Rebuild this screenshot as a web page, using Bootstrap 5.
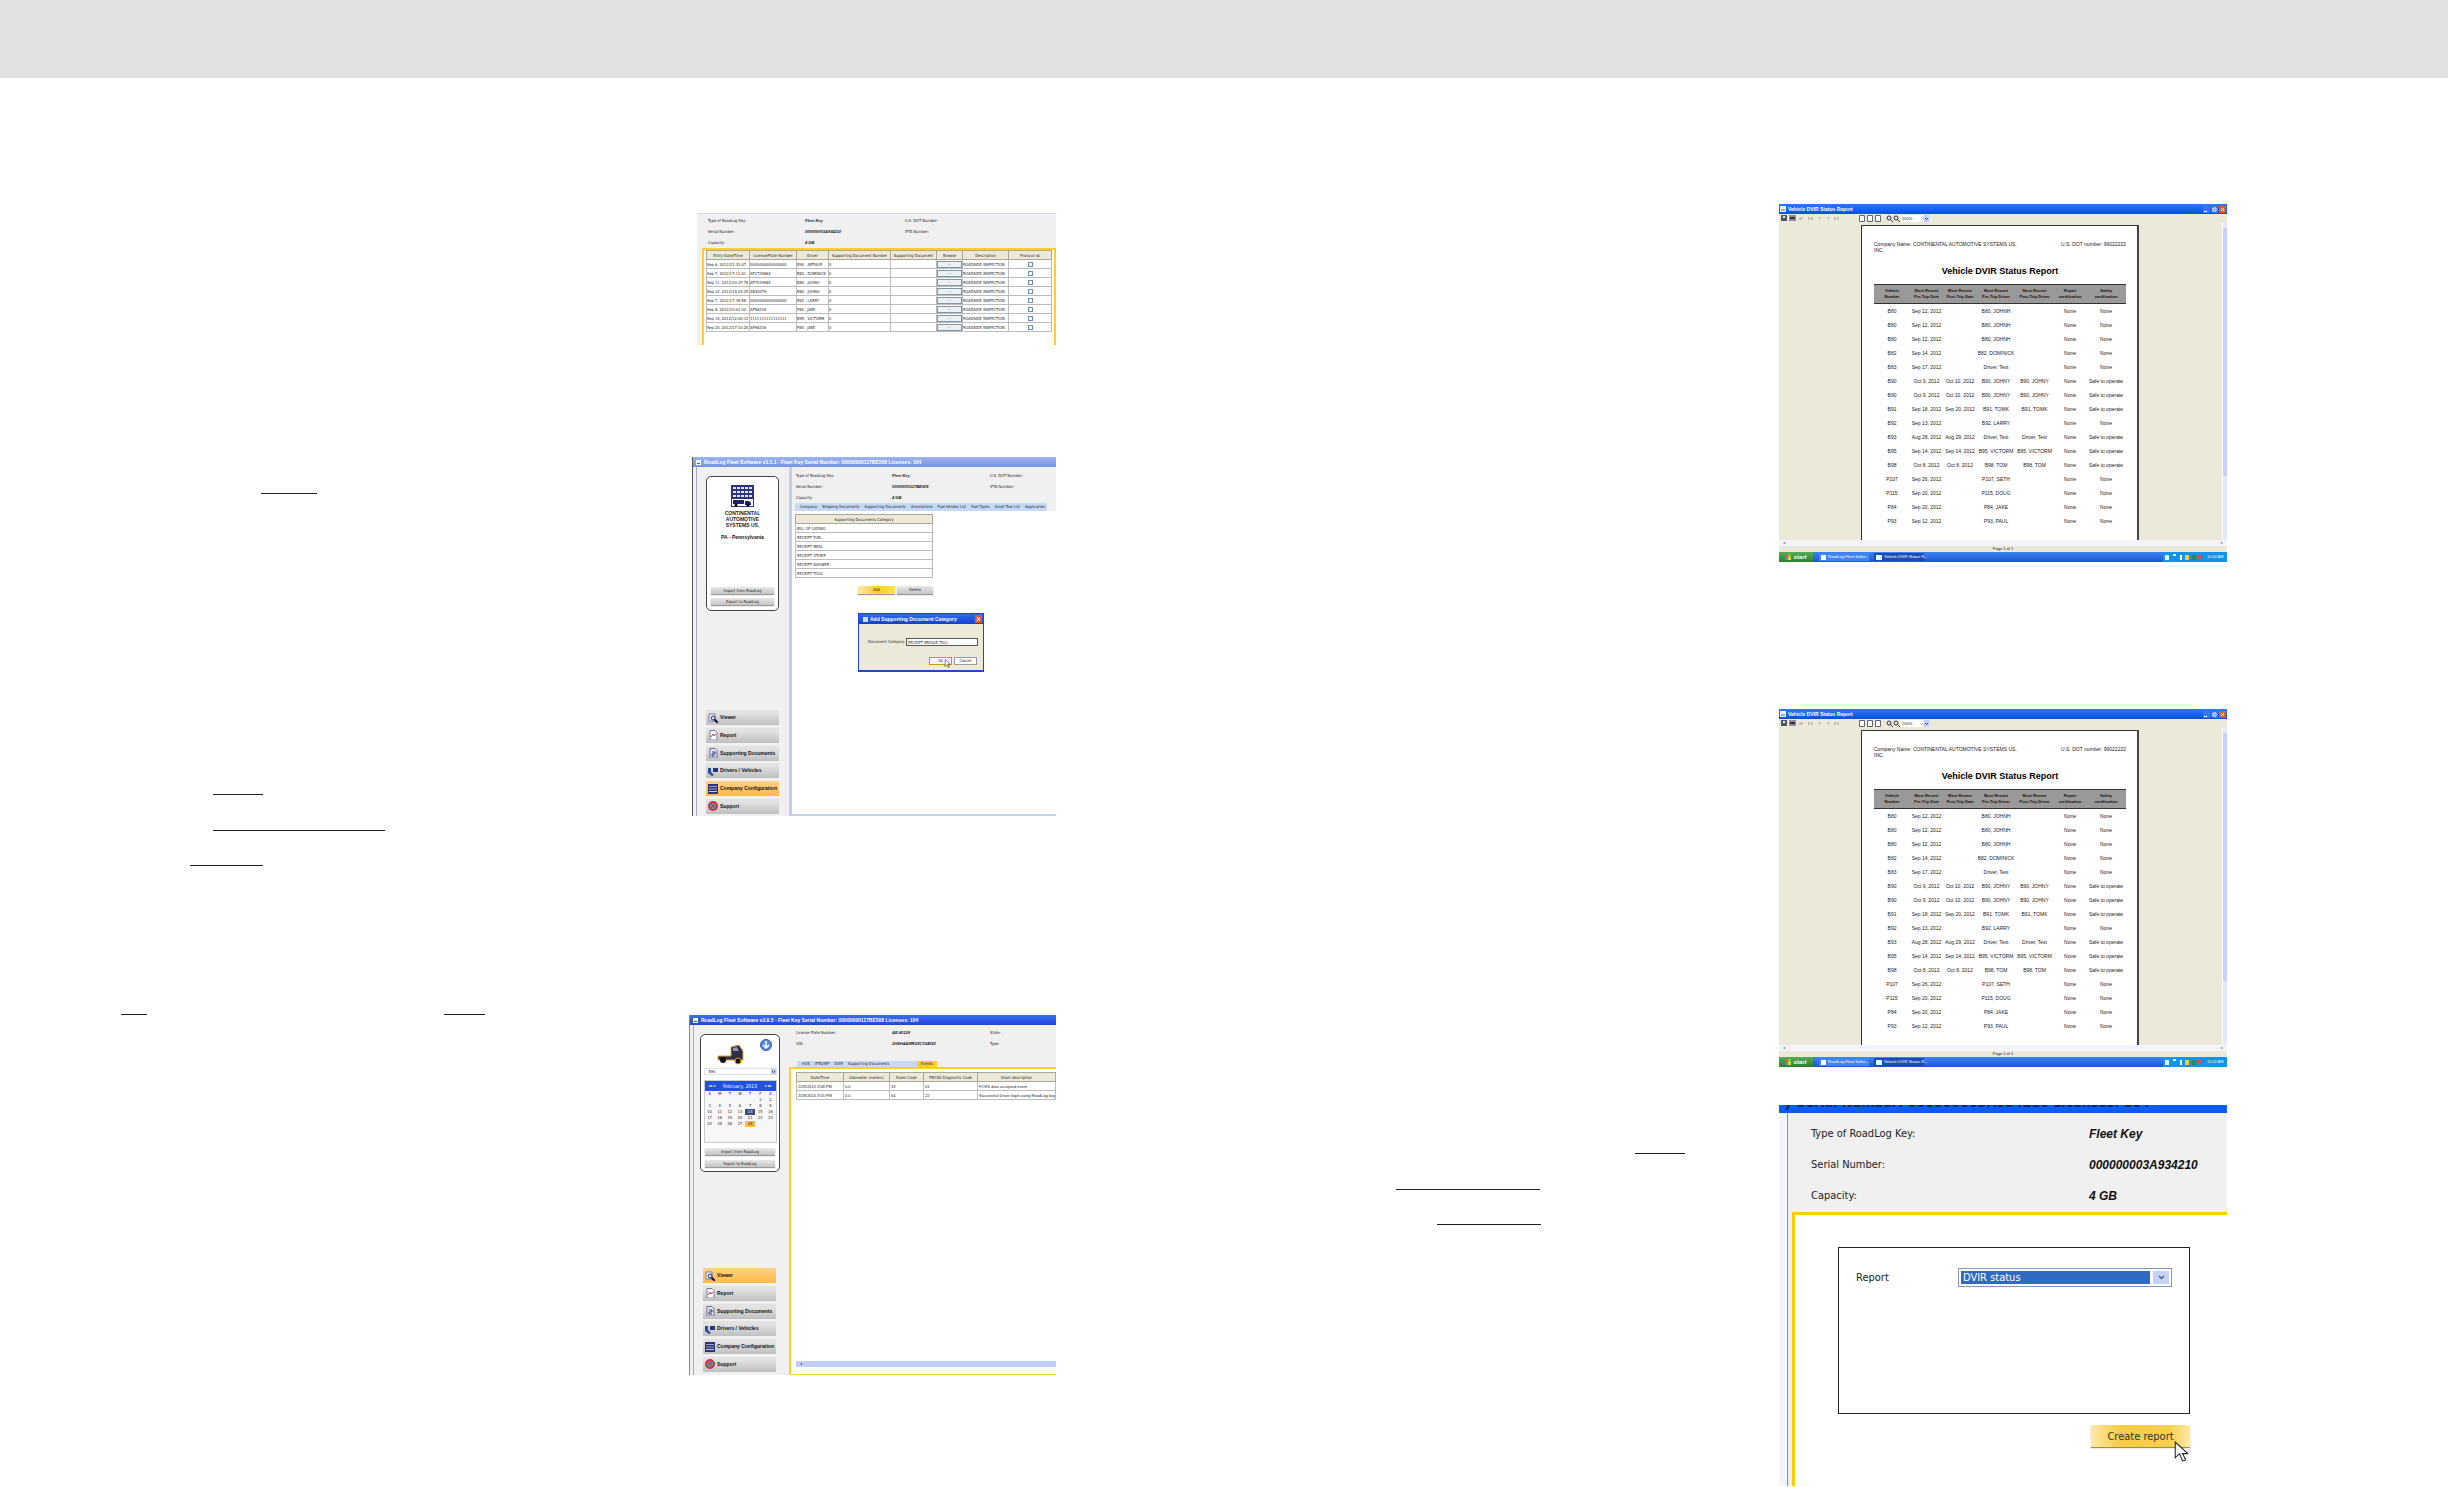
<!DOCTYPE html>
<html lang="en">
<head>
<meta charset="utf-8">
<meta name="viewport" content="width=device-width, initial-scale=1">
<title>RoadLog Fleet Software manual</title>
<link href="https://cdn.jsdelivr.net/npm/bootstrap@5.3.0/dist/css/bootstrap.min.css" rel="stylesheet">
<style>
body{background:#fff;color:#222;font-family:"DejaVu Sans Condensed","Open Sans",sans-serif;font-size:4px;line-height:1}
.topband{height:78px;background:#e2e2e2}
.leaf{flex:1 1 0;min-width:0}
.copy{flex:1 1 0;min-width:0}
.blank{height:1px;background:#231f20}
.shots-l{flex:0 0 367px;margin-right:168px;padding-top:135px}
.shots-r{flex:0 0 448px;margin-right:221px;padding-top:126px}
.shot{position:relative;overflow:hidden;background:#f0f0f0;white-space:nowrap}
.shot button,.shot input,.shot select{font:inherit;line-height:1;padding:0;margin:0;border-radius:0;color:inherit;appearance:none}
.shot svg{display:block;flex:none}
.bi{font-family:"Liberation Sans",sans-serif;font-weight:700;font-style:italic;color:#111}
.facts{display:grid;align-items:center}
/* grid tables */
.gridt{table-layout:fixed;border-collapse:collapse;background:#fff}
.gridt th,.gridt td{height:9px;padding:0 1px;border:1px solid #bcbcbc;overflow:hidden;font-weight:400;line-height:7px}
.f3 .gridt td{font-family:"Liberation Sans",sans-serif;padding-right:0}
.gridt th{background:#ece9d8;text-align:center;border-color:#aaa798}
.gridt button{display:block;width:100%;height:7px;background:#eef1f1;border:1px solid #7d98a8;line-height:4px}
.gridt input{display:block;width:5px;height:5px;margin:0 auto;border:1px solid #6b8db8;background:#fff}
/* figure one */
.f1{width:359px;height:132px;border-top:1px solid #d4d8ea}
.f1 .facts{grid-template-columns:97px 100px 1fr;grid-auto-rows:11px;padding:1px 0 0 11px}
.f1 .pane{height:98px;margin:0 0 0 5px;border:2px solid #fc3;border-bottom:0;background:#fff;padding:0 2px}
.f1 .gridt td{padding:0}
/* fleet windows */
.win{font-size:4px}
.wtitle{height:10px;padding:0 3px;gap:3px;font:700 5px/1 "Liberation Sans",sans-serif;color:#fff}
.side{flex:0 0 93px;margin-left:3px;border-left:1px solid #aab;padding:9px 9px 0 9px;background:#f0f0f1}
.badgecard{background:#fff;border:1px solid #444;border-radius:5px;text-align:center}
.gbtn{display:block;width:63px;height:7px;border:0;background:linear-gradient(#e8e8e8,#c4c4c4);box-shadow:0 1px 1px #999}
.nav6{height:104px}
.nav6 button{height:15px;width:73px;display:flex;align-items:center;gap:2px;padding-left:2px;border:0;background:linear-gradient(#e2e2e2 20%,#bfbfbf);font-family:"Liberation Sans",sans-serif;font-weight:700;font-size:5px;color:#111}
.nav6 button.on{background:linear-gradient(#ffd08a,#fb4)}
.tabsrow{height:8px;align-items:center;background:#c5d9f3;gap:5px;padding-left:5px;color:#223}
.f2{width:364px;height:359px;border-left:1px solid #555}
.f2 .facts,.f3 .facts{grid-template-columns:96px 98px 1fr}
.f2 .nav6{margin-bottom:2px}
.f3 .nav6{margin:0 0 3px 3px}
.f3{height:360px;border-left:1px solid #888}
.company{font:700 5px/6px "Liberation Sans",sans-serif;margin-top:3px}
.dlg{position:absolute;left:165px;top:156px;width:126px;height:59px;background:#ece9d8;border:1px solid #24d;border-bottom-width:2px}
.dlg .bar{height:10px;background:linear-gradient(#2f6bf0,#1240cf);color:#fff;font:700 5px/1 "Liberation Sans",sans-serif}
.dlg button{height:8px;width:23px;background:#fff;border:1px solid #99a}
.dlg input{width:72px;height:8px;border:1px solid #555;background:#fff;padding:0 1px}
.cursor{position:absolute}
.cal{table-layout:fixed;width:71px;border-collapse:collapse;background:#f7f7f7}
.cal td,.cal th{padding:0;height:6px;text-align:center;font-weight:400}
/* report windows */
.rep{height:358px;font-family:"Liberation Sans",sans-serif;background:#ece9d8;display:flex;flex-direction:column}
.rep .bar{height:10px;background:linear-gradient(#2a7cf8,#0550dc);color:#fff;font:700 5px/1 "Liberation Sans",sans-serif;padding-left:1px}
.rep .tools{height:9px;padding:0 1px;gap:1px}
.rep .paper{width:278px;margin:2px 0 0 82px;background:#fff;border:1px solid #333;border-right:2px solid #444;border-bottom:0;padding:15px 11px 0 12px;height:315px}
.rep .paper h2{font-size:9px;line-height:10px;font-weight:700;color:#000;margin:13px 0 8px;text-align:center}
.rep table{table-layout:fixed;width:252px;border-collapse:collapse;font-size:5px;text-align:center}
.rep thead th{height:19px;background:#999;border-top:1px solid #333;border-bottom:1px solid #333;font-size:4px;line-height:6px;color:#111;padding:0;vertical-align:middle}
.rep tbody td{height:14px;padding:0;line-height:6px}
.rep .vbar{width:5px;margin-left:auto;background:#e3e9fb;border-left:1px solid #fff}
.rep .vthumb{height:248px;margin-top:5px;background:#c3d2fb}
.hbar{height:6px;background:#f3f3f8}
.task{height:10px;background:linear-gradient(#3a86f4,#1f55d0);color:#fff}
.task .go{width:34px;height:10px;background:linear-gradient(#55ad55,#2c7f2c);font:italic 700 6px/1 "Liberation Sans",sans-serif;gap:2px}
.task .tray{width:64px;height:10px;background:#1493ea;margin-left:auto;gap:2px}
/* key window */
.f6{height:381px;font-size:11px}
.f6 .bi{font-size:12px}
.cut{height:8px;line-height:20px;background:#0a5df2;color:#05246e;font-weight:700;font-size:14px;overflow:hidden;padding-left:5px}
.cut div{margin-top:-13px}
.f6 .rail{flex:0 0 9px;background:#f5f5fc;border-right:1px solid #7d8cc4}
.f6 .facts{grid-template-columns:278px 1fr;grid-auto-rows:31px;padding:5px 0 0 23px;height:99px}
.f6 .pane{margin-left:4px;border:solid #fc0;border-width:3px 0 0 3px;background:#fff;padding:32px 37px 0 43px;height:275px}
.f6 .box{border:1px solid #222;height:167px;padding:20px 17px}
.f6 .pick{width:214px;height:19px;border:1px solid #7f9db9;padding:2px;background:#fff;gap:3px}
.f6 .pick select{background:#316ac5;color:#fff;border:0;height:13px;flex:1;padding:0 2px}
.f6 .arrow{width:16px;height:13px;background:#c5d3fa}
.f6 .make{width:99px;height:22px;border:0;background:linear-gradient(90deg,#ffe9a8,#f5cc45 30%,#f8cf50 80%,#ffe9a8);box-shadow:0 1px 1px #a98c3a;color:#333}
</style>
</head>
<body>
<header class="topband"></header>
<main class="d-flex overflow-hidden">
  <section class="leaf d-flex">
    <div class="copy">
      <div class="blank" style="width:56px;margin:415px 0 0 261px"></div>
      <div class="blank" style="width:50px;margin:300px 0 0 213px"></div>
      <div class="blank" style="width:172px;margin:35px 0 0 213px"></div>
      <div class="blank" style="width:73px;margin:34px 0 0 190px"></div>
      <div class="d-flex" style="margin:148px 0 0 121px;gap:297px"><div class="blank" style="width:26px"></div><div class="blank" style="width:41px"></div></div>
    </div>
    <div class="shots-l d-flex flex-column align-items-end">

      <div class="shot f1">
        <div class="facts"><span>Type of RoadLog Key:</span><span class="bi">Fleet Key</span><span>U.S. DOT Number:</span><span>Serial Number:</span><span class="bi">000000003A934210</span><span>IFTA Number:</span><span>Capacity:</span><span class="bi">4 GB</span><span></span></div>
        <div class="pane"><table class="gridt w-100"><colgroup><col style="width:43px"><col style="width:47px"><col style="width:32px"><col style="width:62px"><col style="width:46px"><col style="width:26px"><col style="width:46px"><col></colgroup>
          <thead><tr><th>Entry Date/Time</th><th>License/Plate Number</th><th>Driver</th><th>Supporting Document Number</th><th>Supporting Document</th><th>Browse</th><th>Description</th><th>Protocol ok</th></tr></thead><tbody id="inspections"></tbody></table></div>
      </div>

      <div class="shot win f2" style="margin-top:112px">
        <div class="wtitle d-flex align-items-center" style="background:linear-gradient(#9db6f0,#7592e0)"><svg width="5" height="5"><rect width="5" height="5" fill="#fff"/><path d="M1 3h3v1H1z" fill="#36a"/></svg><span>RoadLog Fleet Software v2.1.1 - Fleet Key Serial Number: 00000000117BE508 Licenses: 104</span></div>
        <div class="d-flex" style="height:349px">
          <div class="side d-flex flex-column justify-content-between">
            <div class="badgecard d-flex flex-column align-items-center" style="height:135px;width:73px">
              <svg class="mt-2" width="25" height="22" viewBox="0 0 25 22"><path fill="#2d3578" d="M1 0h23v22H1z"/><path stroke="#dfe3f5" stroke-width="2" stroke-dasharray="3 1" d="M3 3h20M3 7h20M3 11h20"/><path fill="#fff" d="M2 14h21v7H2z"/><path fill="#1d2460" d="M3 15h11v4H3zM15 16h4l2 2v2h-6z"/><circle cx="6" cy="20" r="1.5"/><circle cx="18" cy="20" r="1.5"/></svg>
              <div class="company">CONTINENTAL<br>AUTOMOTIVE<br>SYSTEMS US,<br><br>PA - Pennsylvania</div>
              <button class="gbtn mt-auto">Import from RoadLog</button><button class="gbtn" style="margin:4px 0 5px">Export to RoadLog</button>
            </div>
            <div class="nav6 d-flex flex-column justify-content-between" data-on="4"></div>
          </div>
          <div class="flex-grow-1 d-flex flex-column" style="border-left:3px solid #c3cfea">
            <div class="facts" style="grid-auto-rows:11px;height:36px;padding:3px 0 0 4px"><span>Type of RoadLog Key:</span><span class="bi">Fleet Key</span><span>U.S. DOT Number:</span><span>Serial Number:</span><span class="bi">00000000117BE508</span><span>IFTA Number:</span><span>Capacity:</span><span class="bi">4 GB</span><span></span></div>
            <div class="tabsrow d-flex" style="margin:0 9px 0 3px;border-radius:2px 2px 0 0"><span>Company</span><span>Shipping Documents</span><span>Supporting Documents</span><span>Annotations</span><span>Fuel Vendor List</span><span>Fuel Types</span><span>Asset Tool List</span><span>Application</span></div>
            <div class="bg-white flex-grow-1" style="padding:3px 0 0 3px;border-bottom:2px solid #c3d3ee">
              <table class="gridt" style="width:138px"><thead><tr><th>Supporting Documents Category</th></tr></thead><tbody><tr><td>BILL OF LADING</td></tr><tr><td>RECEIPT FUEL</td></tr><tr><td>RECEIPT MEAL</td></tr><tr><td>RECEIPT OTHER</td></tr><tr><td>RECEIPT SHOWER</td></tr><tr><td>RECEIPT TOOL</td></tr></tbody></table>
              <div class="d-flex" style="margin:8px 0 0 63px;gap:2px"><button style="width:37px;height:8px;border:0;background:linear-gradient(90deg,#ffe9a8,#fc3,#fd6);box-shadow:0 1px 1px #a98">Add</button><button class="gbtn" style="width:36px;height:8px">Delete</button></div>
            </div>
          </div>
        </div>
        <div class="dlg"><div class="bar d-flex align-items-center px-1"><svg width="5" height="5" style="margin-right:2px"><rect width="5" height="5" fill="#cde"/></svg><span>Add Supporting Document Category</span><svg class="ms-auto" width="7" height="8" style="margin-right:-3px"><rect width="7" height="8" fill="#e0582c"/><path d="M2 2l3 4M5 2L2 6" stroke="#fff"/></svg></div>
          <div class="d-flex align-items-center" style="margin:14px 0 0 9px;gap:2px"><label for="cat" style="width:36px">Document Category:</label><input id="cat" value="RECEIPT BRIDGE TOLL"></div>
          <div class="d-flex justify-content-end" style="margin:11px 6px 0 0;gap:2px"><button style="border-color:#c90">Ok</button><button>Cancel</button></div>
        </div>
        <svg class="cursor" style="left:251px;top:202px" width="7" height="9" viewBox="0 0 12 19"><path d="M1 1v15l4-4 3 6 2-1-3-6h5z" fill="#fff" stroke="#000"/></svg>
      </div>

      <div class="shot win f3 w-100" style="margin-top:199px">
        <div class="wtitle d-flex align-items-center" style="background:linear-gradient(#3c6cf5,#2046dc)"><svg width="5" height="5"><rect width="5" height="5" fill="#fff"/><path d="M1 3h3v1H1z" fill="#36a"/></svg><span>RoadLog Fleet Software v2.0.5 - Fleet Key Serial Number: 00000000117BE508 Licenses: 104</span></div>
        <div class="d-flex" style="height:350px">
          <div class="side d-flex flex-column justify-content-between" style="padding-left:6px">
            <div class="badgecard d-flex flex-column align-items-center" style="height:138px;width:80px">
              <div class="d-flex w-100" style="padding:3px 7px 0 16px;height:33px"><svg style="margin-top:6px" width="28" height="21" viewBox="0 0 28 21"><path d="M1 12h13V3l8-2 4 6v9H1z" fill="#2c2f45" stroke="#e3a13c"/><path d="M16 4l4-1 2 4h-6z" fill="#8a93b5"/><circle cx="6" cy="16" r="3" fill="#111"/><circle cx="21" cy="17" r="3" fill="#111" stroke="#d90"/></svg><svg class="ms-auto" width="12" height="14" viewBox="0 0 12 14"><circle cx="6" cy="7" r="5.5" fill="#5b8ce0" stroke="#2b5cb8"/><path d="M6 3v7M3 7l3 3 3-3" stroke="#fff" fill="none" stroke-width="1.5"/></svg></div>
              <div class="d-flex align-items-center border" style="width:73px;height:7px"><select class="border-0 bg-transparent flex-grow-1 px-1" aria-label="Vehicle"><option>B90</option></select><svg width="5" height="5"><rect width="5" height="5" fill="#b9cbf5"/><path d="M1 2l1.500 1.500L4 2" stroke="#357" fill="none"/></svg></div>
              <div style="margin-top:5px;height:63px;background:#f7f7f7;border:1px solid #ccc">
                <div class="d-flex align-items-center justify-content-between text-white px-1" style="height:10px;background:#2350dc"><span>◂◂ ◂</span><span style="font-size:5px">February, 2013</span><span>▸ ▸▸</span></div>
                <table class="cal"><thead><tr><th>S</th><th>M</th><th>T</th><th>W</th><th>T</th><th>F</th><th>S</th></tr></thead><tbody id="days"></tbody></table>
              </div>
              <button class="gbtn" style="margin-top:5px;width:70px">Import from RoadLog</button><button class="gbtn" style="margin-top:5px;width:70px">Export to RoadLog</button>
            </div>
            <div class="nav6 d-flex flex-column justify-content-between" data-on="0"></div>
          </div>
          <div class="flex-grow-1 d-flex flex-column" style="min-width:0">
            <div class="facts" style="grid-auto-rows:11px;height:36px;padding:2px 0 11px 7px"><span>License Plate Number:</span><span class="bi">AE-60129</span><span>State:</span><span>VIN:</span><span class="bi">1HSHAAMR2XC034052</span><span>Type:</span></div>
            <div class="tabsrow d-flex" style="height:6px;margin-left:8px;width:140px"><span>HOS</span><span>IFTA/IRP</span><span>DVIR</span><span>Supporting Documents</span><span class="ms-auto d-flex align-items-center" style="background:#fc2;height:6px;padding:0 4px">Events</span></div>
            <div class="bg-white flex-grow-1 d-flex flex-column" style="border:solid #fc3;border-width:2px 0 1px 2px;padding:3px 0 7px 5px">
              <table class="gridt w-100"><colgroup><col style="width:47px"><col style="width:46px"><col style="width:34px"><col style="width:54px"><col></colgroup><thead><tr><th>Date/Time</th><th>Odometer (meters)</th><th>Event Code</th><th>FMCSA Diagnostic Code</th><th>Short description</th></tr></thead><tbody><tr><td>2/28/2013 3:08 PM</td><td>0.0</td><td>33</td><td>01</td><td>FOSS data accepted event</td></tr><tr><td>2/28/2013 3:05 PM</td><td>0.0</td><td>64</td><td>22</td><td>Successful Driver login using RoadLog key</td></tr></tbody></table>
              <div class="mt-auto d-flex align-items-center ps-1" style="height:6px;background:#c1cdf9;color:#345">◂</div>
            </div>
          </div>
        </div>
      </div>
    </div>
  </section>

  <section class="leaf d-flex">
    <div class="copy">
      <div class="blank" style="width:50px;margin:1075px 0 0 411px"></div>
      <div class="blank" style="width:144px;margin:35px 0 0 172px"></div>
      <div class="blank" style="width:104px;margin:34px 0 0 213px"></div>
    </div>
    <div class="shots-r">
      <div class="shot rep"></div>
      <div class="shot rep" style="margin-top:147px"></div>
      <div class="shot f6" style="margin-top:38px">
        <div class="cut"><div>y Serial Number: 000000003A934210 Licenses: 104</div></div>
        <div class="d-flex">
          <div class="rail"></div>
          <div class="flex-grow-1">
            <div class="facts"><span>Type of RoadLog Key:</span><span class="bi">Fleet Key</span><span>Serial Number:</span><span class="bi">000000003A934210</span><span>Capacity:</span><span class="bi">4 GB</span></div>
            <div class="pane d-flex flex-column">
              <div class="box d-flex align-items-start justify-content-between"><label for="report" style="line-height:19px">Report</label><div class="pick d-flex"><select id="report"><option>DVIR status</option></select><span class="arrow d-flex align-items-center justify-content-center"><svg width="7" height="5"><path d="M1 1l2.500 2.500L6 1" stroke="#4d6185" stroke-width="1.500" fill="none"/></svg></span></div></div>
              <button class="make align-self-end" style="margin-top:11px">Create report</button>
            </div>
          </div>
        </div>
        <svg class="cursor" style="left:395px;top:336px" width="14" height="21" viewBox="0 0 13 20"><path d="M1 1v15l4-4 3 7 3-1-3-6h5z" fill="#fff" stroke="#222"/></svg>
      </div>
    </div>
  </section>
</main>

<template id="report-window">
  <div class="bar d-flex align-items-center"><svg width="6" height="6" style="margin-right:2px"><rect width="6" height="6" fill="#eee"/><path d="M1 4h4" stroke="#286"/></svg><span>Vehicle DVIR Status Report</span>
    <svg class="ms-auto" width="25" height="9"><rect x="1" y="1" width="7" height="7" rx="1" fill="#3c74ea"/><path d="M2 6.500h3" stroke="#fff"/><rect x="9" y="1" width="7" height="7" rx="1" fill="#3c74ea"/><path d="M11 3h3v3h-3z" stroke="#fff" fill="none"/><rect x="17" y="1" width="7" height="7" rx="1" fill="#e2582c"/><path d="M19 3l3 3M22 3l-3 3" stroke="#fff"/></svg></div>
  <div class="tools d-flex align-items-center"><svg width="120" height="9" viewBox="0 0 120 9"><path fill="#4d5968" d="M1 1h6v6H1z"/><path fill="#e8e8e8" d="M3 2h2v2H3z"/><path fill="#8b8f98" d="M9 1h7v6H9z"/><path fill="#333" d="M10 3h5v2h-5z"/><path d="M19 5h3V3M29 3v3M32 3v3M40 3l-1 2M48 3l1 2M55 3v3M58 3v3" stroke="#999" fill="none"/><g fill="#fff" stroke="#667"><path d="M79.500 1.500h5v6h-5zM87.500 1.500h5v6h-5zM95.500 1.500h5v6h-5z"/></g><g fill="none" stroke="#334"><circle cx="109" cy="4" r="2"/><path d="M110 5l3 3"/><circle cx="116" cy="4" r="2"/><path d="M117 5l3 3"/></g></svg><span class="bg-white d-flex align-items-center" style="width:22px;height:7px;padding-left:1px">200%</span><svg width="5" height="7"><rect width="5" height="7" fill="#c3d0fa"/><path d="M1 3l1.500 1.500L4 3" stroke="#446" fill="none"/></svg></div>
  <div class="d-flex" style="height:317px"><div class="paper">
      <div class="d-flex justify-content-between" style="line-height:6px;font-size:5px"><span>Company Name: CONTINENTAL AUTOMOTIVE SYSTEMS US,<br>INC.</span><span>U.S. DOT number: 99022222</span></div>
      <h2>Vehicle DVIR Status Report</h2>
      <table><colgroup><col style="width:36px"><col style="width:33px"><col style="width:34px"><col style="width:38px"><col style="width:39px"><col style="width:32px"><col></colgroup>
      <thead><tr><th>Vehicle<br>Number</th><th>Most Recent<br>Pre-Trip Date</th><th>Most Recent<br>Post-Trip Date</th><th>Most Recent<br>Pre-Trip Driver</th><th>Most Recent<br>Post-Trip Driver</th><th>Repair<br>certification</th><th>Safety<br>certification</th></tr></thead><tbody></tbody></table>
    </div><div class="vbar"><div class="vthumb"></div></div></div>
  <div class="hbar d-flex justify-content-between align-items-center px-1" style="color:#47a"><span>◂</span><span>▸</span></div>
  <div class="text-center" style="height:6px;line-height:6px">Page 1 of 1</div>
  <div class="task d-flex align-items-center"><div class="go d-flex align-items-center justify-content-center"><svg width="6" height="6"><path fill="#e53" d="M0 0h3v3H0z"/><path fill="#7c4" d="M3 0h3v3H3z"/><path fill="#48f" d="M0 3h3v3H0z"/><path fill="#fc3" d="M3 3h3v3H3z"/></svg>start</div>
    <div class="d-flex align-items-center" style="width:50px;height:8px;margin-left:6px;background:#3f84f3;gap:2px;padding-left:2px"><svg width="5" height="5"><rect width="5" height="5" fill="#fff"/></svg>RoadLog Fleet Softw...</div>
    <div class="d-flex align-items-center" style="width:50px;height:8px;margin-left:5px;background:#1c4bb5;gap:2px;padding-left:2px"><svg width="6" height="5"><rect width="6" height="5" fill="#dfe"/></svg>Vehicle DVIR Status R...</div>
    <div class="tray d-flex align-items-center"><svg width="42" height="8"><path fill="#eee" d="M2 2h4v5H2zM10 1h3v2h-3z"/><path fill="#fff" d="M17 2h2v5h-2z"/><path fill="#fc3" d="M22 2h4v5h-4z"/><path fill="#384" d="M29 2h4v5h-4z"/><path fill="#e43" d="M35 2h4v4h-4z"/></svg><span>11:02 AM</span></div></div>
</template>

<script src="https://cdn.jsdelivr.net/npm/bootstrap@5.3.0/dist/js/bootstrap.bundle.min.js"></script>
<script>
const cells = a => '<tr>' + a.map(c => `<td>${c}</td>`).join('') + '</tr>';

document.getElementById('inspections').innerHTML = [
  ['Sep 6, 2012/22:32:07','0000000000000000','B90 , ARTHUR'],
  ['Sep 7, 2012/17:11:01','AP1729864','B82 , DOMINICK'],
  ['Sep 11, 2012/10:37:76','AP7019984','B80 , JOHNH'],
  ['Sep 12, 2012/14:24:25','AB40079','B80 , JOHNH'],
  ['Sep 7, 2012/17:39:58','0000000000000000','B92 , LARRY'],
  ['Sep 8, 2012/10:01:02','AP56216','P84 , JAKE'],
  ['Sep 14, 2012/12:00:12','1111111111111111','B95 , VICTORM'],
  ['Sep 20, 2012/17:10:20','AP56216','P84 , JAKE']
].map((r,i) => cells([...r,'0','','<button>...</button>','ROADSIDE INSPECTION',`<input type="checkbox" aria-label="Protocol ok ${i+1}">`])).join('');

let html = '', d = -4;
for (let w = 0; w < 5; w++) {
  html += '<tr>';
  for (let k = 0; k < 7; k++, d++) {
    const s = d === 14 ? ' style="background:#3d4b80;color:#fff"' : d === 28 ? ' style="background:#fb4"' : '';
    html += `<td${s}>${d > 0 && d < 29 ? d : ''}</td>`;
  }
  html += '</tr>';
}
document.getElementById('days').innerHTML = html;

const icons = [
  '<path fill="#fff" stroke="#77a" d="M1 1h6v7H1z"/><circle cx="5" cy="5" r="2" fill="#cdf" stroke="#236"/><path d="M6.500 6.500L10 10" stroke="#114" stroke-width="2"/>',
  '<path fill="#fff" stroke="#77a" d="M2 .5h5l2 2V10H2z"/><path d="M3 7l2-3 1 2 2-2" stroke="#c44" fill="none"/>',
  '<path fill="#e6eaf8" stroke="#669" d="M2 .5h5l2 2V10H2z"/><path d="M4 4h3v2H4v2h3" stroke="#336" fill="none"/>',
  '<path fill="#2a4d9c" d="M0 2h3v4l3 3-2 1-4-3z"/><path fill="#223a7a" d="M5 2h5v4H5z"/>',
  '<path fill="#2d3578" d="M0 0h10v10H0z"/><path stroke="#99a6d8" d="M1 2.500h8M1 5h8"/><path fill="#ccd" d="M1 7h8v1H1z"/>',
  '<circle cx="5" cy="5" r="4" fill="#59c" stroke="#c33" stroke-width="2"/><path d="M2 2l6 6M8 2L2 8" stroke="#c33"/>'
];
const names = ['Viewer','Report','Supporting Documents','Drivers / Vehicles','Company Configuration','Support'];
document.querySelectorAll('.nav6').forEach(n => {
  n.innerHTML = names.map((t,i) => `<button${i === +n.dataset.on ? ' class="on"' : ''}><svg width="10" height="10" viewBox="0 0 10 10">${icons[i]}</svg>${t}</button>`).join('');
});

const N = 'None', S = 'Safe to operate';
const rows = [
  ['B80','Sep 12, 2012','','B80, JOHNH','',N,N],
  ['B80','Sep 12, 2012','','B80, JOHNH','',N,N],
  ['B80','Sep 12, 2012','','B80, JOHNH','',N,N],
  ['B82','Sep 14, 2012','','B82, DOMINICK','',N,N],
  ['B83','Sep 17, 2012','','Driver, Test','',N,N],
  ['B90','Oct 9, 2012','Oct 10, 2012','B90, JOHNY','B90, JOHNY',N,S],
  ['B90','Oct 9, 2012','Oct 10, 2012','B90, JOHNY','B90, JOHNY',N,S],
  ['B91','Sep 18, 2012','Sep 20, 2012','B91, TOMK','B91, TOMK',N,S],
  ['B92','Sep 13, 2012','','B92, LARRY','',N,N],
  ['B93','Aug 28, 2012','Aug 29, 2012','Driver, Test','Driver, Test',N,S],
  ['B95','Sep 14, 2012','Sep 14, 2012','B95, VICTORM','B95, VICTORM',N,S],
  ['B98','Oct 8, 2012','Oct 8, 2012','B98, TOM','B98, TOM',N,S],
  ['P107','Sep 26, 2012','','P107, SETH','',N,N],
  ['P115','Sep 20, 2012','','P115, DOUG','',N,N],
  ['P84','Sep 20, 2012','','P84, JAKE','',N,N],
  ['P93','Sep 12, 2012','','P93, PAUL','',N,N]
];
document.querySelectorAll('.rep').forEach(r => {
  r.append(document.getElementById('report-window').content.cloneNode(true));
  r.querySelector('tbody').innerHTML = rows.map(cells).join('');
});
</script>
</body>
</html>
